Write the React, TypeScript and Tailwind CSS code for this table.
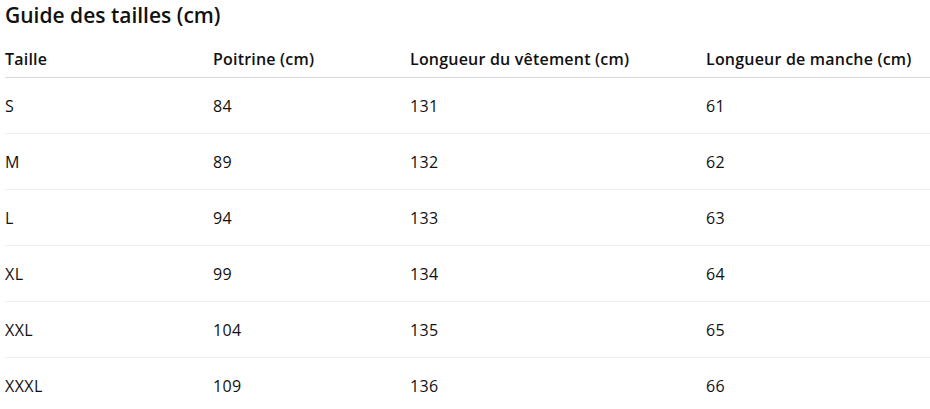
import React from 'react';

const rows = [
  { size: 'S', chest: '84', length: '131', sleeve: '61' },
  { size: 'M', chest: '89', length: '132', sleeve: '62' },
  { size: 'L', chest: '94', length: '133', sleeve: '63' },
  { size: 'XL', chest: '99', length: '134', sleeve: '64' },
  { size: 'XXL', chest: '104', length: '135', sleeve: '65' },
  { size: 'XXXL', chest: '109', length: '136', sleeve: '66' },
];

const App = () => {
  return (
    <div className="bg-white text-[#111] pl-[5px] w-[930px]" style={{ fontFamily: '"Open Sans", "Noto Sans", sans-serif' }}>
      <h2 className="text-[21px] leading-[31px] font-semibold">Guide des tailles (cm)</h2>
      <table className="mt-[8px] w-[925px] border-collapse text-[16px] table-fixed">
        <colgroup>
          <col className="w-[208px]" />
          <col className="w-[197px]" />
          <col className="w-[296px]" />
          <col />
        </colgroup>
        <thead>
          <tr className="border-b border-[#d9d9d9]">
            <th className="text-left font-semibold pt-[9px] pb-[7px] leading-[22px] tracking-[0.2px]">Taille</th>
            <th className="text-left font-semibold pt-[9px] pb-[7px] leading-[22px] tracking-[0.2px]">Poitrine (cm)</th>
            <th className="text-left font-semibold pt-[9px] pb-[7px] leading-[22px] tracking-[0.2px]">Longueur du vêtement (cm)</th>
            <th className="text-left font-semibold pt-[9px] pb-[7px] leading-[22px] tracking-[0.2px]">Longueur de manche (cm)</th>
          </tr>
        </thead>
        <tbody>
          {rows.map((r, i) => (
            <tr key={r.size} className={i < rows.length - 1 ? 'border-b border-[#f0f0f0]' : ''}>
              <td className="pt-[17px] pb-[15px] leading-[23px] tracking-[0.4px]">{r.size}</td>
              <td className="pt-[17px] pb-[15px] leading-[23px] tracking-[0.4px]">{r.chest}</td>
              <td className="pt-[17px] pb-[15px] leading-[23px] tracking-[0.4px]">{r.length}</td>
              <td className="pt-[17px] pb-[15px] leading-[23px] tracking-[0.4px]">{r.sleeve}</td>
            </tr>
          ))}
        </tbody>
      </table>
    </div>
  );
};

export default App;
